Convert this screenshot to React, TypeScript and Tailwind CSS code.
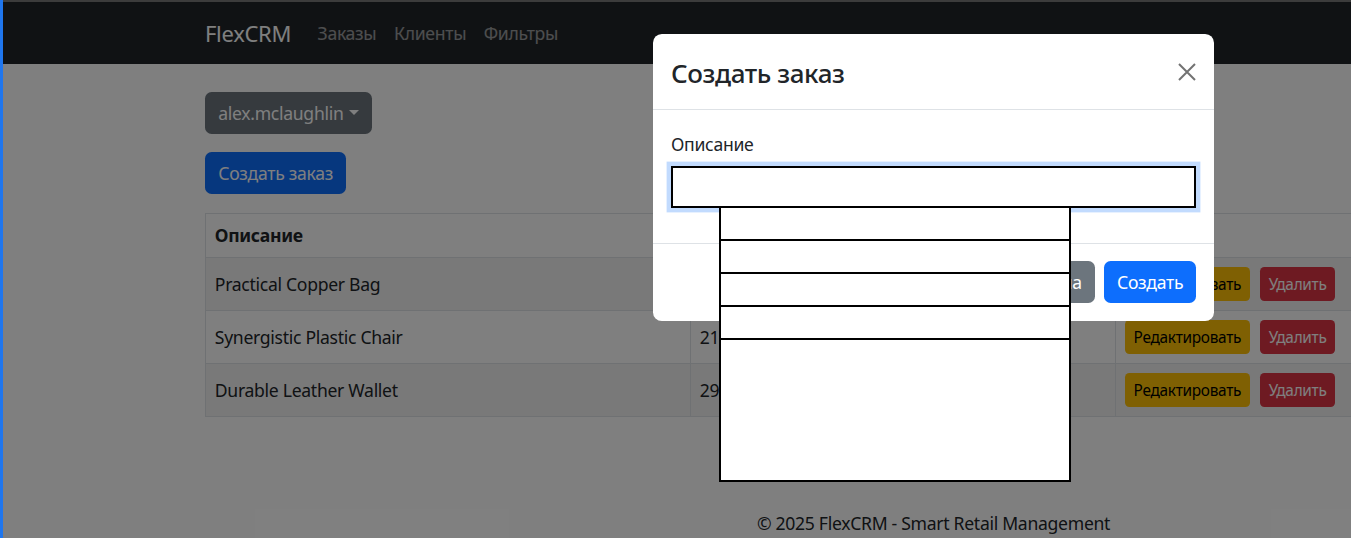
export default function App() {
  const rows = [
    { d: "Practical Copper Bag", a: "2450.00" },
    { d: "Synergistic Plastic Chair", a: "2130.00" },
    { d: "Durable Leather Wallet", a: "2980.00" },
  ];
  return (
    <div className="relative w-[1351px] h-[538px] overflow-hidden bg-white text-[#212529] font-['Noto_Sans',sans-serif] tracking-[-0.3px]">
      {/* navbar */}
      <nav className="mt-[2px] h-[62px] bg-[#212529] flex items-center pl-[205px]">
        <span className="text-[22px] leading-[33px] text-white mr-[17.6px]">FlexCRM</span>
        <span className="px-[8.8px] text-[17.6px] leading-[26.4px] text-white/55">Заказы</span>
        <span className="px-[8.8px] text-[17.6px] leading-[26.4px] text-white/55">Клиенты</span>
        <span className="px-[8.8px] text-[17.6px] leading-[26.4px] text-white/55">Фильтры</span>
      </nav>

      {/* main */}
      <div className="pl-[205px] pt-[28px]">
        <button className="h-[41.8px] px-[13.2px] rounded-[6.6px] bg-[#6c757d] text-white text-[17.6px] leading-[26.4px] flex items-center">
          alex.mclaughlin
          <span className="ml-[5px] w-0 h-0 border-x-[5.3px] border-x-transparent border-t-[5.3px] border-t-white" />
        </button>
        <button className="mt-[18.5px] h-[41.8px] px-[13.2px] rounded-[6.6px] bg-[#0d6efd] text-white text-[17.6px] leading-[26.4px] flex items-center">
          Создать заказ
        </button>

        <table className="mt-[19px] w-[1200px] border-collapse text-[17.6px] leading-[26.4px]">
          <thead>
            <tr className="bg-white">
              <th className="w-[485px] h-[44px] px-[8.8px] text-left font-bold border border-[#dee2e6]">Описание</th>
              <th className="w-[425px] h-[44px] px-[8.8px] text-left font-bold border border-[#dee2e6]">Сумма</th>
              <th className="h-[44px] px-[8.8px] text-left font-bold border border-[#dee2e6]">Действия</th>
            </tr>
          </thead>
          <tbody>
            {rows.map((r, i) => (
              <tr key={i} className={i % 2 === 0 ? "bg-[#f2f2f2]" : "bg-white"}>
                <td className="h-[53px] px-[8.8px] border border-[#dee2e6] align-middle">{r.d}</td>
                <td className="h-[53px] px-[8.8px] border border-[#dee2e6] align-middle">{r.a}</td>
                <td className="h-[53px] px-[8.8px] border border-[#dee2e6] align-middle">
                  <div className="flex items-center gap-[10px]">
                    <button className="h-[34px] px-[8.8px] rounded-[4.4px] bg-[#ffc107] text-black text-[15.4px] leading-[23px]">Редактировать</button>
                    <button className="h-[34px] px-[8.8px] rounded-[4.4px] bg-[#dc3545] text-white text-[15.4px] leading-[23px]">Удалить</button>
                  </div>
                </td>
              </tr>
            ))}
          </tbody>
        </table>
      </div>

      <footer className="mt-[93px] w-[1867px] text-center text-[17.6px] leading-[26.4px]">
        © 2025 FlexCRM - Smart Retail Management
      </footer>

      {/* backdrop */}
      <div className="absolute inset-0 bg-black/50" />

      {/* modal */}
      <div className="absolute left-[653px] top-[34px] w-[561px] bg-white rounded-[8.8px]">
        <div className="h-[76px] flex items-center justify-between pl-[18px] pr-[18px] border-b border-[#dee2e6]">
          <h4 className="text-[26px] font-medium leading-[31px] pt-[3px] tracking-[-0.4px]">Создать заказ</h4>
          <svg width="18" height="18" viewBox="0 0 18 18" className="opacity-55">
            <path d="M1 1 L17 17 M17 1 L1 17" stroke="#000" strokeWidth="2" />
          </svg>
        </div>
        <div className="pt-[20.5px] pb-[17.6px] px-[18px]">
          <div className="text-[17.6px] leading-[26.4px] mb-[8.8px]">Описание</div>
          <div className="mb-[17.6px] h-[41.8px] border-2 border-black bg-white shadow-[0_0_0_4.4px_rgba(13,110,253,0.25)]" />
        </div>
        <div className="border-t border-[#dee2e6] px-[13.2px] py-[13.2px] flex justify-end">
          <button className="m-[4.4px] h-[41.8px] px-[13.2px] rounded-[6.6px] bg-[#6c757d] text-white text-[17.6px] leading-[26.4px]">Отмена</button>
          <button className="m-[4.4px] h-[41.8px] px-[13.2px] rounded-[6.6px] bg-[#0d6efd] text-white text-[17.6px] leading-[26.4px]">Создать</button>
        </div>
      </div>

      {/* suggestion list */}
      <div className="absolute left-[719px] top-[206px] w-[352px] h-[276px] bg-white border-2 border-black">
        <div className="h-[33px] border-b-2 border-black" />
        <div className="h-[33px] border-b-2 border-black" />
        <div className="h-[33px] border-b-2 border-black" />
        <div className="h-[33px] border-b-2 border-black" />
      </div>

      {/* window chrome */}
      <div className="absolute left-0 right-0 top-0 h-[2px] bg-[#3c3c3c]" />
      <div className="absolute left-0 top-0 bottom-0 w-[3px] bg-[#1f76ee]" />
    </div>
  );
}
